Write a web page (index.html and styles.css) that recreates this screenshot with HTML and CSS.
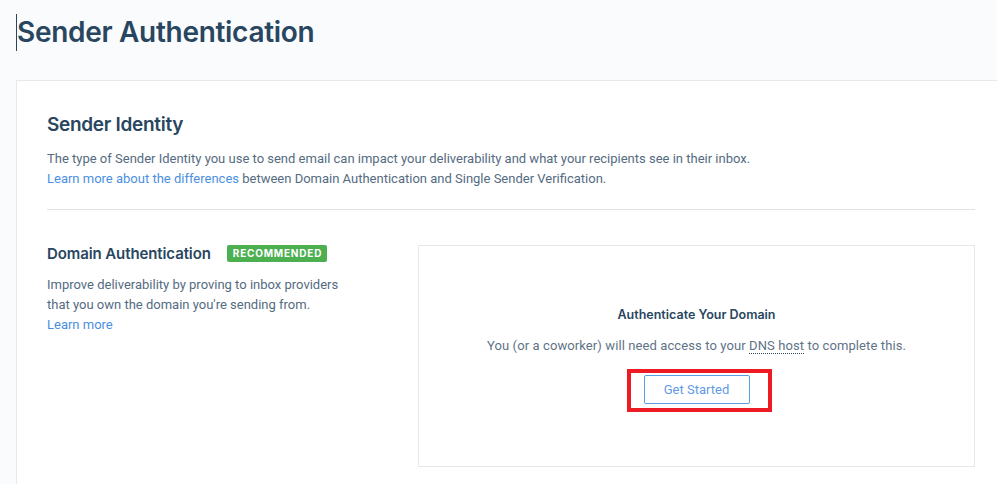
FILE: index.html
```html
<!DOCTYPE html>
<html lang="en">
<head>
    <meta charset="UTF-8">
    <meta name="viewport" content="width=device-width, initial-scale=1.0">
    <title>Sender Authentication</title>
    <link rel="stylesheet" href="styles.css">
</head>
<body>
    <div class="page">
        <h1 class="page-title">Sender Authentication</h1>

        <div class="card">
            <h2 class="card-title">Sender Identity</h2>
            <p class="intro">
                The type of Sender Identity you use to send email can impact your deliverability and what your recipients see in their inbox.<br>
                <a href="#" class="link">Learn more about the differences</a> between Domain Authentication and Single Sender Verification.
            </p>

            <div class="divider"></div>

            <div class="section">
                <div class="section-info">
                    <div class="section-head">
                        <h3 class="section-title">Domain Authentication</h3>
                        <span class="badge">Recommended</span>
                    </div>
                    <p class="section-desc">
                        Improve deliverability by proving to inbox providers that you own the domain you're sending from.<br>
                        <a href="#" class="link">Learn more</a>
                    </p>
                </div>

                <div class="panel">
                    <h4 class="panel-title">Authenticate Your Domain</h4>
                    <p class="panel-text">You (or a coworker) will need access to your <span class="term">DNS host</span> to complete this.</p>
                    <div class="button-wrap">
                        <button type="button" class="button">Get Started</button>
                        <span class="highlight"></span>
                    </div>
                </div>
            </div>
        </div>
    </div>
</body>
</html>
```

FILE: styles.css
```css
html, body {
    margin: 0;
    padding: 0;
    overflow: hidden;
}
body {
    background-color: #fafbfc;
    font-family: Roboto, "Liberation Sans", Arial, sans-serif;
    color: #546b81;
    height: 484px;
}
.page {
    padding: 0 0 0 16px;
}
.page-title {
    margin: 0;
    padding: 13px 0 0 0;
    height: 67px;
    box-sizing: border-box;
    font-family: Inter, "Liberation Sans", sans-serif;
    font-size: 28px;
    font-weight: 600;
    letter-spacing: -0.3px;
    color: #294661;
    line-height: 38px;
    border-left: 1px solid #294661;
    border-image: linear-gradient(to bottom, transparent 15px, #294661 15px, #294661 50px, transparent 50px) 1;
}
.card {
    background: #fff;
    border: 1px solid #e6e9ec;
    border-right: none;
    width: 990px;
    margin-top: 13px;
    padding: 30px 31px 20px 30px;
    box-sizing: border-box;
}
.card-title {
    margin: 0;
    font-family: Inter, "Liberation Sans", sans-serif;
    font-size: 19px;
    font-weight: 600;
    letter-spacing: -0.3px;
    color: #294661;
    line-height: 28px;
}
.intro {
    margin: 10px 0 0;
    font-size: 13px;
    line-height: 20px;
}
.link {
    color: #4a90e2;
    text-decoration: none;
}
.divider {
    height: 1px;
    background: #e0e3e6;
    margin: 20px 0 35px;
}
.section {
    display: grid;
    grid-template-columns: 340px 1fr;
    gap: 31px;
}
.section-head {
    display: flex;
    align-items: center;
    gap: 16px;
    height: 17px;
}
.section-title {
    margin: 0;
    font-family: Inter, "Liberation Sans", sans-serif;
    font-size: 15px;
    font-weight: 600;
    letter-spacing: -0.1px;
    color: #294661;
}
.badge {
    background: #4caf50;
    color: #fff;
    font-family: Inter, "Liberation Sans", sans-serif;
    font-size: 10px;
    font-weight: 700;
    letter-spacing: 0.8px;
    text-transform: uppercase;
    padding: 0 5px 0 6px;
    line-height: 17px;
    border-radius: 2px;
}
.section-desc {
    margin: 13px 0 0;
    max-width: 305px;
    font-size: 13px;
    line-height: 20px;
}
.panel {
    border: 1px solid #e6e9ec;
    height: 222px;
    box-sizing: border-box;
    text-align: center;
    padding-top: 60px;
}
.panel-title {
    margin: 0;
    font-family: Inter, "Liberation Sans", sans-serif;
    font-size: 12.5px;
    font-weight: 600;
    color: #294661;
    line-height: 18px;
}
.panel-text {
    margin: 13px 0 0;
    font-size: 13px;
    letter-spacing: 0.1px;
    line-height: 18px;
    color: #5f7387;
}
.term {
    border-bottom: 1px dotted #294661;
}
.button-wrap {
    position: relative;
    display: inline-block;
    margin-top: 20px;
}
.button {
    display: block;
    width: 106px;
    height: 29px;
    background: #fff;
    border: 1px solid #5a9be6;
    border-radius: 2px;
    color: #5f9ae6;
    font-family: Roboto, "Liberation Sans", sans-serif;
    font-size: 13px;
    cursor: pointer;
}
.highlight {
    position: absolute;
    left: -17px;
    top: -6px;
    width: 145px;
    height: 43px;
    border: 4px solid #ed1c24;
    box-sizing: border-box;
    pointer-events: none;
}
```
